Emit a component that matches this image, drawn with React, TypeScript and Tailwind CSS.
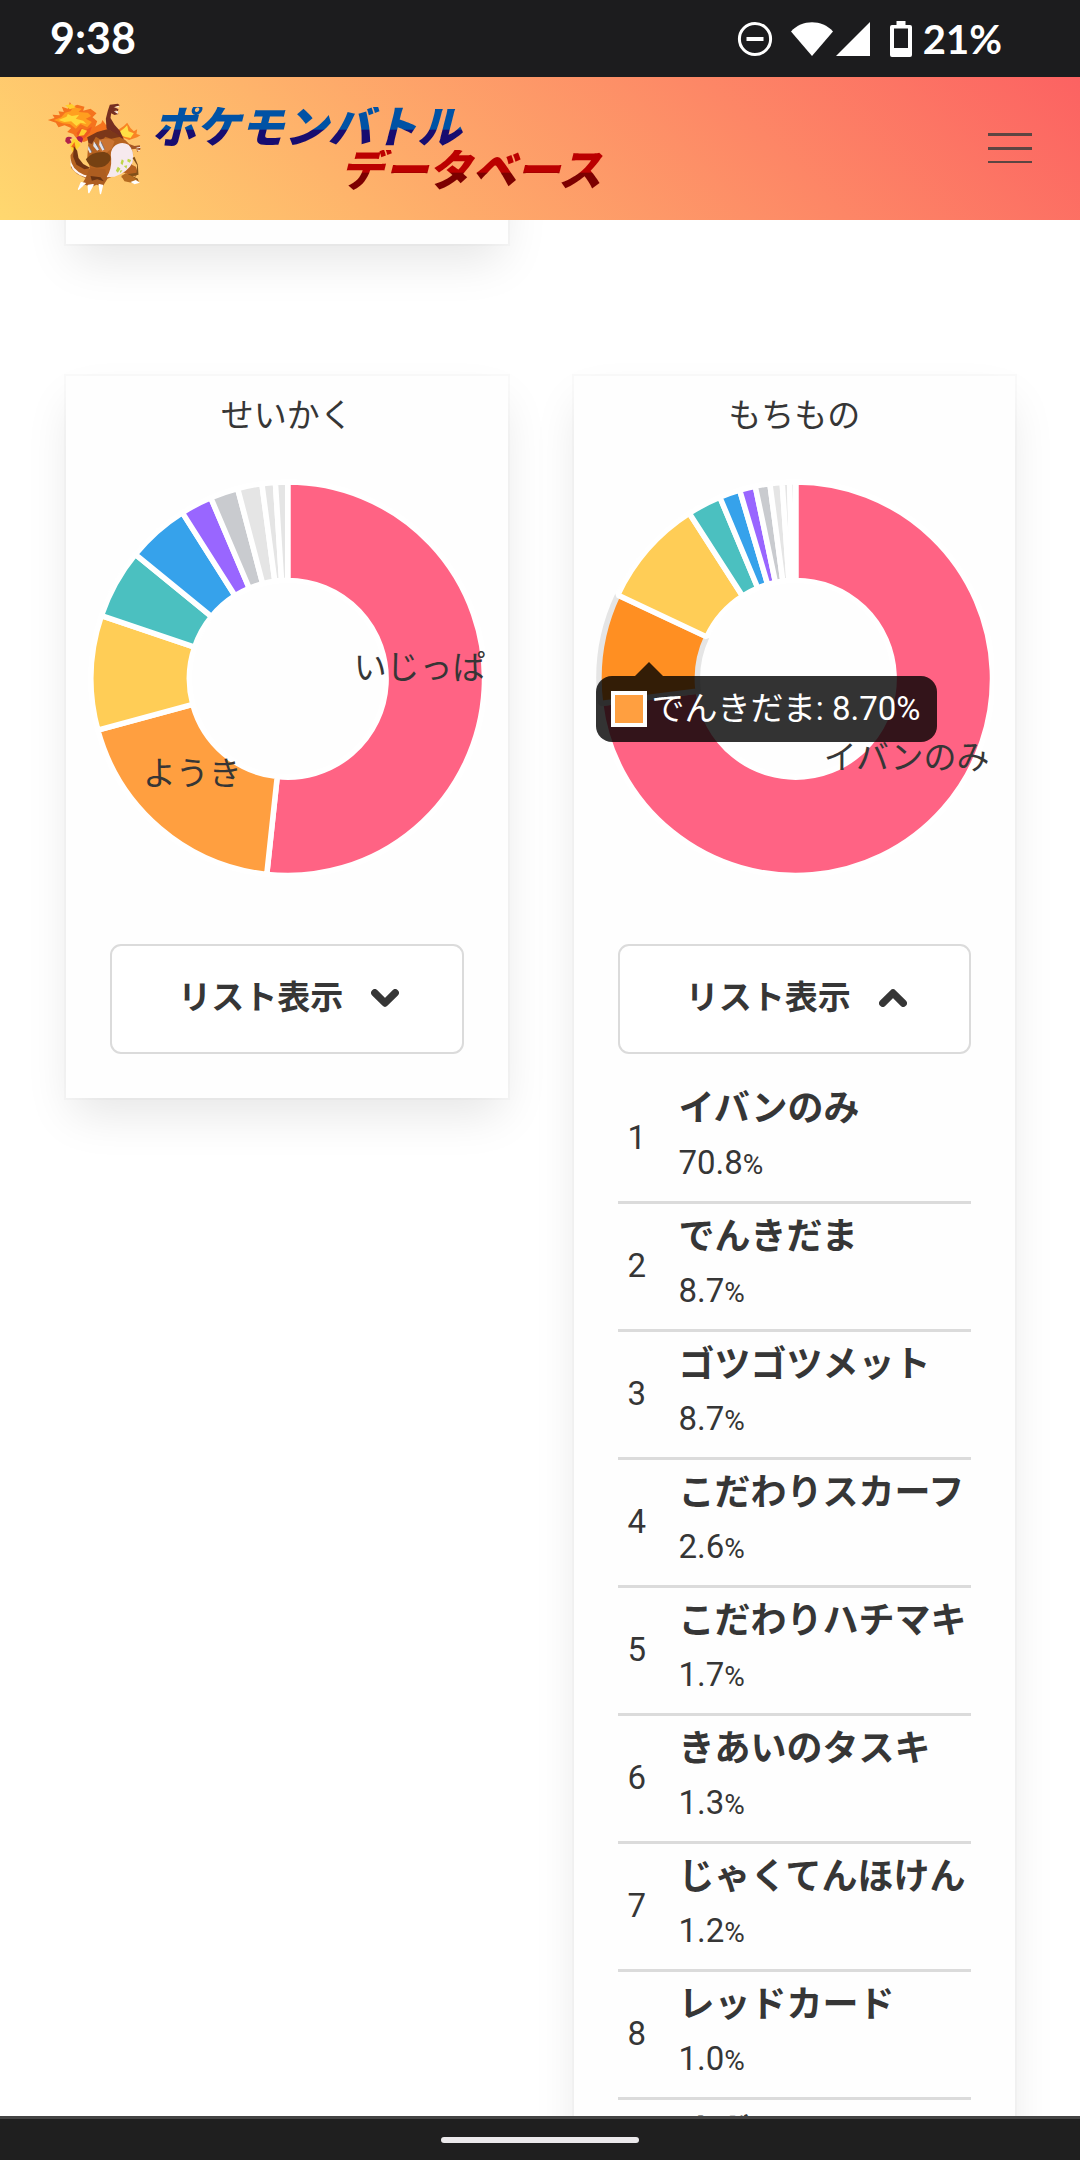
import { useState } from "react";

type Slice = { end: number; color: string; active?: boolean };
type Label = { text: string; x: number; y: number };
type Entry = { name: string; rate: string };

const natureSlices: Slice[] = [
  { end: 51.7, color: "#ff6384" },
  { end: 70.8, color: "#ff9f40" },
  { end: 80.2, color: "#ffcd56" },
  { end: 85.9, color: "#4bc0c0" },
  { end: 91, color: "#36a2eb" },
  { end: 93.6, color: "#9966ff" },
  { end: 95.9, color: "#c9cbcf" },
  { end: 97.9, color: "#e5e5e5" },
  { end: 99, color: "#e5e5e5" },
  { end: 100, color: "#e5e5e5" },
];

const itemSlices: Slice[] = [
  { end: 73, color: "#ff6384" },
  { end: 82, color: "#ff8f22", active: true },
  { end: 90.9, color: "#ffcd56" },
  { end: 93.7, color: "#4bc0c0" },
  { end: 95.4, color: "#36a2eb" },
  { end: 96.7, color: "#9966ff" },
  { end: 97.9, color: "#c9cbcf" },
  { end: 98.9, color: "#e5e5e5" },
  { end: 99.5, color: "#e5e5e5" },
  { end: 100, color: "#e5e5e5" },
];

const natures: Entry[] = [
  { name: "いじっぱり", rate: "51.7" },
  { name: "ようき", rate: "19.1" },
];

const items: Entry[] = [
  { name: "イバンのみ", rate: "70.8" },
  { name: "でんきだま", rate: "8.7" },
  { name: "ゴツゴツメット", rate: "8.7" },
  { name: "こだわりスカーフ", rate: "2.6" },
  { name: "こだわりハチマキ", rate: "1.7" },
  { name: "きあいのタスキ", rate: "1.3" },
  { name: "じゃくてんほけん", rate: "1.2" },
  { name: "レッドカード", rate: "1.0" },
  { name: "オボンのみ", rate: "0.6" },
];

const CX = 201;
const CY = 200;
const OUTER = 197;
const INNER = 98.5;

function point(percent: number, radius: number) {
  const a = (percent / 100) * Math.PI * 2;
  return `${CX + Math.sin(a) * radius} ${CY - Math.cos(a) * radius}`;
}

function slicePath(start: number, end: number) {
  const large = end - start > 50 ? 1 : 0;
  return `M${point(start, OUTER)} A${OUTER} ${OUTER} 0 ${large} 1 ${point(end, OUTER)} L${point(end, INNER)} A${INNER} ${INNER} 0 ${large} 0 ${point(start, INNER)} Z`;
}

function Doughnut({ title, slices, labels }: { title: string; slices: Slice[]; labels: Label[] }) {
  return (
    <svg viewBox="0 0 400 400" className="block w-full overflow-hidden" role="img" aria-label={title}>
      {slices.map((s, i) => (
        <path
          key={i}
          d={slicePath(i === 0 ? 0 : slices[i - 1].end, s.end)}
          fill={s.color}
          stroke={s.active ? "#e5e5e5" : "#ffffff"}
          strokeWidth="5.5"
          strokeLinejoin="bevel"
        />
      ))}
      {labels.map((l) => (
        <text key={l.text} x={l.x} y={l.y} fontSize="33" fill="#363636">
          {l.text}
        </text>
      ))}
    </svg>
  );
}

function Tooltip() {
  return (
    <div className="absolute left-px top-[197px] flex h-[66px] items-center gap-[5px] whitespace-nowrap rounded-[16px] bg-black/80 pl-[15px] pr-[16px] text-[33px] leading-[50px] text-white">
      <svg viewBox="0 0 28 14" className="absolute -top-[14px] left-[39px] h-[14px] w-[28px]">
        <path d="M0 14 14 0 28 14Z" fill="#000" fillOpacity="0.8" />
      </svg>
      <span className="size-9 border-4 border-white bg-[#ff9f40]" />
      <span>でんきだま: 8.70%</span>
    </div>
  );
}

function Chevron({ up }: { up: boolean }) {
  return (
    <svg
      viewBox="0 0 28 18"
      className="h-[18px] w-7"
      fill="none"
      stroke="currentColor"
      strokeWidth="7.4"
      strokeLinecap="round"
      strokeLinejoin="round"
      aria-hidden="true"
    >
      <path d={up ? "M3.8 14.2 14 4 24.2 14.2" : "M3.8 3.8 14 14 24.2 3.8"} />
    </svg>
  );
}

function StatCard({
  title,
  slices,
  labels,
  entries,
  initiallyOpen = false,
  tooltip = false,
}: {
  title: string;
  slices: Slice[];
  labels: Label[];
  entries: Entry[];
  initiallyOpen?: boolean;
  tooltip?: boolean;
}) {
  const [open, setOpen] = useState(initiallyOpen);
  return (
    <section className="bg-[#fefefe] px-[21px] pb-11 pt-[15px] shadow-[0_22px_44px_-6px_rgba(10,10,10,0.1),0_0_0_2px_rgba(10,10,10,0.02)]">
      <h2 className="text-center text-[33px] leading-[50px]">{title}</h2>
      <div className="relative mt-[38px]">
        <Doughnut title={title} slices={slices} labels={labels} />
        {tooltip && <Tooltip />}
      </div>
      <div className="mt-[65px] px-[23px]">
        <button
          type="button"
          aria-expanded={open}
          onClick={() => setOpen(!open)}
          className="flex h-[110px] w-full items-center justify-center gap-7 rounded-[11px] border-2 border-[#dbdbdb] bg-white pb-[2px] pl-1 text-[33px] font-bold"
        >
          <span>リスト表示</span>
          <Chevron up={open} />
        </button>
        {open && (
          <ol className="mt-[22px]">
            {entries.map((e, i) => (
              <li key={e.name} className="flex h-32 items-center border-b-[3px] border-[#dbdbdb]">
                <span className="w-[61px] shrink-0 pl-[10px] text-[33px]">{i + 1}</span>
                <div className="pb-[2px] whitespace-nowrap">
                  <div className="text-[36px] leading-[50px] font-bold">{e.name}</div>
                  <div className="mt-1 text-[33px] leading-[50px]">
                    {e.rate}
                    <span className="text-[28px]">%</span>
                  </div>
                </div>
              </li>
            ))}
          </ol>
        )}
      </div>
    </section>
  );
}

function StatusBar() {
  return (
    <div className="flex h-[77px] shrink-0 items-center justify-between bg-[#1c1c1e] pl-[50px] pr-[78px] font-[Lato,sans-serif] text-[43px] font-bold text-white">
      <span>9:38</span>
      <div className="flex items-center">
        <svg viewBox="0 0 36 36" className="mr-[18px] size-9" fill="none" stroke="#fff">
          <circle cx="18" cy="18" r="15.6" strokeWidth="3" />
          <path d="M9.5 18H26.5" strokeWidth="4" />
        </svg>
        <svg viewBox="0 0 42 34" className="h-[34px] w-[42px]" fill="#fff">
          <path d="M0 9.5C11 -2.8 31 -2.8 42 9.5L21 34Z" />
        </svg>
        <svg viewBox="0 0 34 34" className="ml-[3px] size-[34px]" fill="#fff">
          <path d="M34 0V34H0Z" />
        </svg>
        <svg viewBox="0 0 22 36" className="ml-5 h-9 w-[22px]" fill="#fff">
          <path
            fillRule="evenodd"
            d="M6.5 0H15.5V4H20Q22 4 22 6V34Q22 36 20 36H2Q0 36 0 34V6Q0 4 2 4H6.5ZM4 7.5V27H18V7.5Z"
          />
        </svg>
        <span className="ml-[11px] text-[40px]">21%</span>
      </div>
    </div>
  );
}

function DragonMark() {
  return (
    <svg viewBox="50 35 290 285" className="h-[95px] w-[97px] shrink-0" aria-hidden="true">
      <path d="M52 92 72 86 66 76 88 78 84 66 100 68 94 52 112 58 118 38 126 52 140 46 162 52 158 64 180 58 198 72 186 84 200 96 194 112 212 102 216 92 226 106 240 104 236 122 222 140 196 134 180 150 160 158 140 150 128 134 110 128 122 116 102 108 84 114 76 100Z" fill="#f5731d" />
      <path d="M70 92 92 84 104 70 120 66 128 54 154 58 144 68 172 70 182 80 166 88 184 98 170 114 150 104 136 118 118 104 96 102Z" fill="#ff9f1f" />
      <path d="M84 92 108 82 112 74 124 80 146 76 136 88 158 94 168 104 150 100 138 110 122 96 102 98Z" fill="#ffd83a" />
      <path d="M138 132 152 116 166 122 184 112 178 130 162 146 146 150Z" fill="#ef5a20" />
      <path d="M104 48 124 44 136 54 118 60ZM154 118 170 124 160 138 144 140Z" fill="#ffce2c" />
      <path d="M106 146Q114 138 126 146L118 150 124 160 112 164 104 156ZM138 144Q150 136 158 148L154 160 142 154Z" fill="#b0214b" />
      <path d="M118 170 128 148 142 152 150 168 136 184 126 188Z" fill="#ffd22e" />
      <path d="M122 172 132 158 136 178Z" fill="#f26b1a" />
      <path d="M240 102 262 122 280 110 290 100 300 116 310 126 320 120 318 134 330 138 320 144 296 152 280 146 262 150 240 138Z" fill="#f98324" />
      <path d="M262 132 282 116 290 108 294 126 310 132 300 146 282 142Z" fill="#ffdf45" />
      <path d="M238 46 262 43 268 48 252 54 264 60 262 66 254 62 264 74 252 77 242 72 240 86 252 106 268 124 280 150 268 160 240 140 228 116 226 88 232 64Z" fill="#762f20" />
      <path d="M249 54 264 50 266 54ZM250 66 262 66 262 74Z" fill="#fff2ea" />
      <path d="M174 152 200 132 216 124 240 124 262 140 284 152 302 170 308 196 304 226 316 232 322 250 316 262 300 258 276 248 236 266 214 276 168 268 140 254 122 236 120 198 132 180 138 212 158 228 180 240 170 210Z" fill="#b66220" />
      <path d="M170 144 200 128 230 120 254 130 270 142 242 148 224 142 216 154 196 142 184 164 174 160Z" fill="#7b3719" />
      <path d="M206 152Q236 142 252 156L244 178 222 194 202 180Z" fill="#cb7432" />
      <path d="M130 170 140 184 144 206 158 224 180 236 162 240 138 226 128 202Z" fill="#713413" />
      <path d="M166 210Q184 186 222 188Q244 194 240 212Q226 238 194 234 174 230 166 210Z" fill="#764112" />
      <path d="M250 172Q270 154 294 166Q314 184 306 220Q292 248 252 262L228 264Q244 240 242 208 238 184 250 172Z" fill="#f6e9ee" />
      <path d="M274 210 280 214 276 228 270 222ZM292 208 302 212 298 220 290 216ZM262 232 270 238 262 250 256 244ZM280 230 290 228 288 238ZM268 244 276 242 270 252Z" fill="#bfd64a" />
      <path d="M120 206Q122 240 160 256L202 266 164 264Q128 252 120 226Z" fill="#fff5ef" />
      <path d="M306 206 320 228 318 250 294 254 272 264 298 266 324 276 322 268 306 260 324 256 322 226 312 202Z" fill="#805019" />
      <path d="M272 260 286 252 308 262 326 276 310 282 282 276Z" fill="#b56b20" />
      <path d="M300 278 316 272 328 280 312 285Z" fill="#fff" />
      <path d="M178 236 224 240 230 270 216 292 198 286 182 294 164 286 150 292 164 268Z" fill="#ad5d20" />
      <path d="M180 260 210 264 220 276 200 270 184 274Z" fill="#693311" />
      <path d="M164 282 144 300 152 280ZM188 286 175 310 173 288ZM206 286 210 313 216 288Z" fill="#fff" stroke="#fff" strokeWidth="4" strokeLinejoin="round" />
      <path d="M190 156 206 180 200 184 188 170ZM208 152 222 180 216 184 206 166ZM174 170 184 188 178 192 172 180Z" fill="#dfe3ed" />
      <path d="M196 162 206 180M212 158 222 180M176 174 184 188" stroke="#59617c" strokeWidth="2" />
      <path d="M296 164 312 170 328 168 330 180 320 188 318 178 304 180Z" fill="#a45524" />
      <path d="M318 176 330 174M320 182 328 184" stroke="#f8e9e3" strokeWidth="3" />
    </svg>
  );
}

function Header() {
  return (
    <header className="relative flex h-[143px] shrink-0 items-center justify-between bg-[linear-gradient(45deg,#ffd86f,#fc6262)] pl-[47px] pr-[48px]">
      <a href="#top" className="flex items-center gap-2">
        <DragonMark />
        <span className="flex flex-col pt-[3px] text-[44px] leading-[43px] font-black italic">
          <span className="bg-[linear-gradient(180deg,#0052a5_52%,#170c70_53%)] bg-clip-text pr-2 text-transparent">
            ポケモンバトル
          </span>
          <span className="ml-[188px] bg-[linear-gradient(180deg,#bb0000_52%,#7c0000_53%)] bg-clip-text pr-2 text-transparent">
            データベース
          </span>
        </span>
      </a>
      <button type="button" aria-label="メニュー" className="flex w-11 flex-col gap-[11px] pt-4 pb-[18px]">
        <span className="h-[3px] bg-[#5c4542]" />
        <span className="h-[3px] bg-[#5c4542]" />
        <span className="h-[2px] bg-[#5c4542]" />
      </button>
    </header>
  );
}

export default function App() {
  return (
    <div className="flex h-screen flex-col overflow-hidden bg-white font-[Roboto,'Noto_Sans_CJK_JP',sans-serif] text-[#363636]">
      <StatusBar />
      <Header />
      <main className="flex min-h-0 flex-1 flex-col overflow-hidden pl-[66px] pr-[65px]">
        <div className="-mt-40 grid shrink-0 grid-cols-2 gap-x-[66px]">
          <div className="h-46 bg-[#fefefe] shadow-[0_22px_44px_-6px_rgba(10,10,10,0.1),0_0_0_2px_rgba(10,10,10,0.02)]" />
        </div>
        <div className="mt-[132px] grid shrink-0 grid-cols-2 items-start gap-x-[66px]">
          <StatCard
            title="せいかく"
            slices={natureSlices}
            labels={[
              { text: "いじっぱ", x: 267, y: 200 },
              { text: "ようき", x: 56, y: 306 },
            ]}
            entries={natures}
          />
          <StatCard
            title="もちもの"
            slices={itemSlices}
            labels={[{ text: "イバンのみ", x: 229, y: 290 }]}
            entries={items}
            initiallyOpen
            tooltip
          />
        </div>
      </main>
      <div className="flex h-11 shrink-0 items-center justify-center border-t-[3px] border-[#444444] bg-[#1f1f1f]">
        <span className="h-[6px] w-[198px] rounded-[3px] bg-[#ebe9eb]" />
      </div>
    </div>
  );
}
